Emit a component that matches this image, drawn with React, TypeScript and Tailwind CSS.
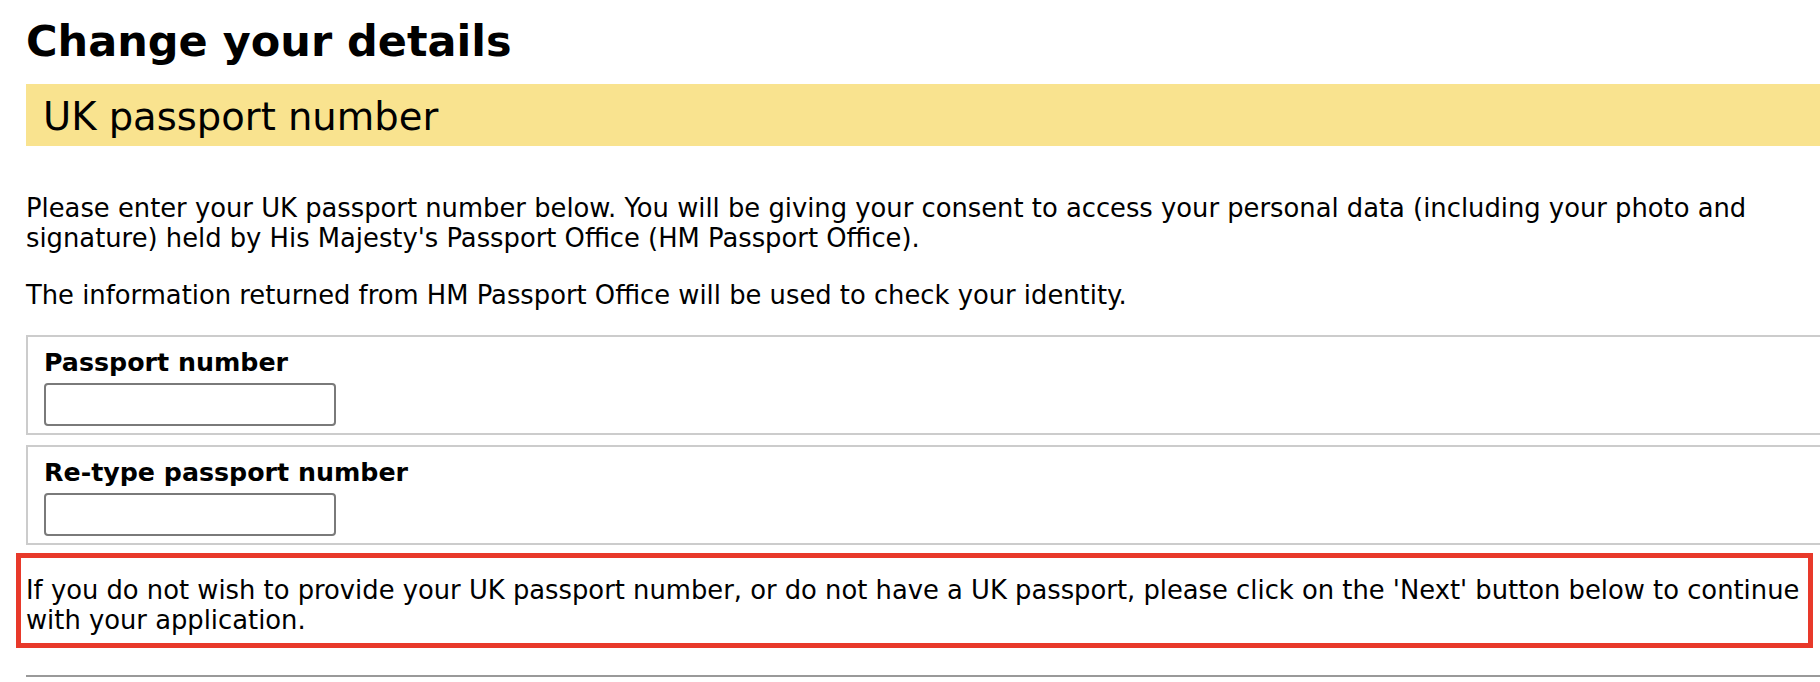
export default function App() {
  return (
    <div className="w-[1820px] h-[682px] overflow-hidden bg-white text-black font-['DejaVu_Sans',Verdana,sans-serif]">
      <div className="w-[1810px] ml-[26px] pt-[17px]">
        <h1 className="text-[43px] leading-[48px] font-bold">Change your details</h1>

        <h2 className="mt-[19px] h-[62px] bg-[#f9e38f] pl-[17px] pt-[3px] text-[38.5px] leading-[59px]">
          UK passport number
        </h2>

        <p className="mt-[47px] text-[25.8px] leading-[30px]">
          Please enter your UK passport number below. You will be giving your consent to access your personal data
          (including your photo and signature) held by His Majesty's Passport Office (HM Passport Office).
        </p>
        <p className="mt-[27px] text-[25.8px] leading-[30px]">
          The information returned from HM Passport Office will be used to check your identity.
        </p>

        <div className="mt-[25px] flex flex-col gap-[10px]">
          <div className="border-2 border-[#cccccc] pl-[16px] pt-[11px] pb-[7px]">
            <label className="block text-[25.3px] leading-[30px] font-bold">Passport number</label>
            <input
              type="text"
              className="mt-[5px] block w-[292px] h-[43px] border-2 border-[#7a7a7a] rounded-[4px] bg-white"
            />
          </div>
          <div className="border-2 border-[#cccccc] pl-[16px] pt-[11px] pb-[7px]">
            <label className="block text-[25.3px] leading-[30px] font-bold">Re-type passport number</label>
            <input
              type="text"
              className="mt-[5px] block w-[292px] h-[43px] border-2 border-[#7a7a7a] rounded-[4px] bg-white"
            />
          </div>
        </div>

        <div className="mt-[8px] -ml-[10px] w-[1797px] border-[5px] border-[#e8392a] pl-[5px] pt-[17px] pb-[8px]">
          <p className="w-[1810px] text-[25.8px] leading-[30px]">
            If you do not wish to provide your UK passport number, or do not have a UK passport, please click on the
            'Next' button below to continue with your application.
          </p>
        </div>

        <div className="mt-[27px] h-[2px] bg-[#999999]" />
      </div>
    </div>
  );
}
